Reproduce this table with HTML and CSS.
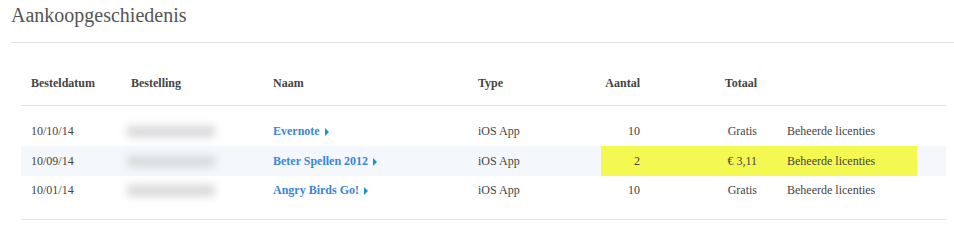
FILE: index.html
```html
<!DOCTYPE html>
<html>
<head>
    <meta charset="UTF-8">
    <title>Aankoopgeschiedenis</title>
    <link rel="stylesheet" href="styles.css">
</head>
<body>
    <div class="page">
        <h1 class="title">Aankoopgeschiedenis</h1>

        <div class="history">
            <table class="purchases">
                <colgroup>
                    <col class="c-date">
                    <col class="c-order">
                    <col class="c-name">
                    <col class="c-type">
                    <col class="c-qty">
                    <col class="c-total">
                    <col class="c-lic">
                    <col class="c-rest">
                </colgroup>
                <thead>
                    <tr>
                        <th>Besteldatum</th>
                        <th>Bestelling</th>
                        <th>Naam</th>
                        <th>Type</th>
                        <th class="num qty">Aantal</th>
                        <th class="num total">Totaal</th>
                        <th></th>
                        <th></th>
                    </tr>
                </thead>
                <tbody>
                    <tr>
                        <td>10/10/14</td>
                        <td><div class="blurred"></div></td>
                        <td class="name"><a href="#">Evernote</a></td>
                        <td>iOS App</td>
                        <td class="num qty">10</td>
                        <td class="num total">Gratis</td>
                        <td class="lic">Beheerde licenties</td>
                        <td></td>
                    </tr>
                    <tr class="alt">
                        <td>10/09/14</td>
                        <td><div class="blurred"></div></td>
                        <td class="name"><a href="#">Beter Spellen 2012</a></td>
                        <td>iOS App</td>
                        <td class="num qty mark">2</td>
                        <td class="num total mark">€ 3,11</td>
                        <td class="lic mark">Beheerde licenties</td>
                        <td></td>
                    </tr>
                    <tr>
                        <td>10/01/14</td>
                        <td><div class="blurred"></div></td>
                        <td class="name"><a href="#">Angry Birds Go!</a></td>
                        <td>iOS App</td>
                        <td class="num qty">10</td>
                        <td class="num total">Gratis</td>
                        <td class="lic">Beheerde licenties</td>
                        <td></td>
                    </tr>
                </tbody>
            </table>
        </div>
    </div>
</body>
</html>
```

FILE: styles.css
```css
* {
    box-sizing: border-box;
    margin: 0;
    padding: 0;
}

body {
    font-family: "Liberation Serif", serif;
    color: #444;
    background: #fff;
}

.page {
    padding: 0 0 0 11px;
}

.title {
    font-size: 20px;
    font-weight: normal;
    color: #555;
    line-height: 24px;
    padding-top: 3px;
    height: 43px;
    border-bottom: 1px solid #e2e2e2;
}

.history {
    padding: 20px 0 0 10px;
}

.purchases {
    width: 925px;
    table-layout: fixed;
    border-collapse: collapse;
    font-size: 12px;
    border-bottom: 1px solid #e4e4e4;
}

/* column widths */
.c-date { width: 100px; }
.c-order { width: 142px; }
.c-name { width: 205px; }
.c-type { width: 133px; }
.c-qty { width: 49px; }
.c-total { width: 127px; }
.c-lic { width: 140px; }
.c-rest { width: 29px; }

.purchases th {
    text-align: left;
    font-weight: bold;
    color: #444;
    height: 42px;
    padding: 0 10px;
    border-bottom: 1px solid #e2e2e2;
    white-space: nowrap;
}

.purchases td {
    height: 30px;
    padding: 0 10px;
    vertical-align: middle;
    white-space: nowrap;
}

.purchases tbody tr:first-child td {
    height: 41px;
    padding-top: 11px;
}

.purchases tbody tr:last-child td {
    height: 43px;
    padding-bottom: 13px;
}

.purchases .num {
    text-align: right;
}

.purchases .qty {
    padding-left: 0;
}

.purchases .total {
    padding-right: 20px;
}

.alt td {
    background-color: #f4f8fc;
}

.alt td.mark {
    background-color: #f4f951;
}

.name {
    padding-bottom: 4px;
}

.name a {
    color: #3a86d8;
    font-weight: bold;
    text-decoration: none;
}

.name a::after {
    content: "";
    display: inline-block;
    margin-left: 5px;
    border-top: 4px solid transparent;
    border-bottom: 4px solid transparent;
    border-left: 4px solid #1a8fd8;
    vertical-align: -1px;
}

.blurred {
    width: 88px;
    height: 11px;
    margin-left: -4px;
    background: #d8d8da;
    filter: blur(4px);
}
```
